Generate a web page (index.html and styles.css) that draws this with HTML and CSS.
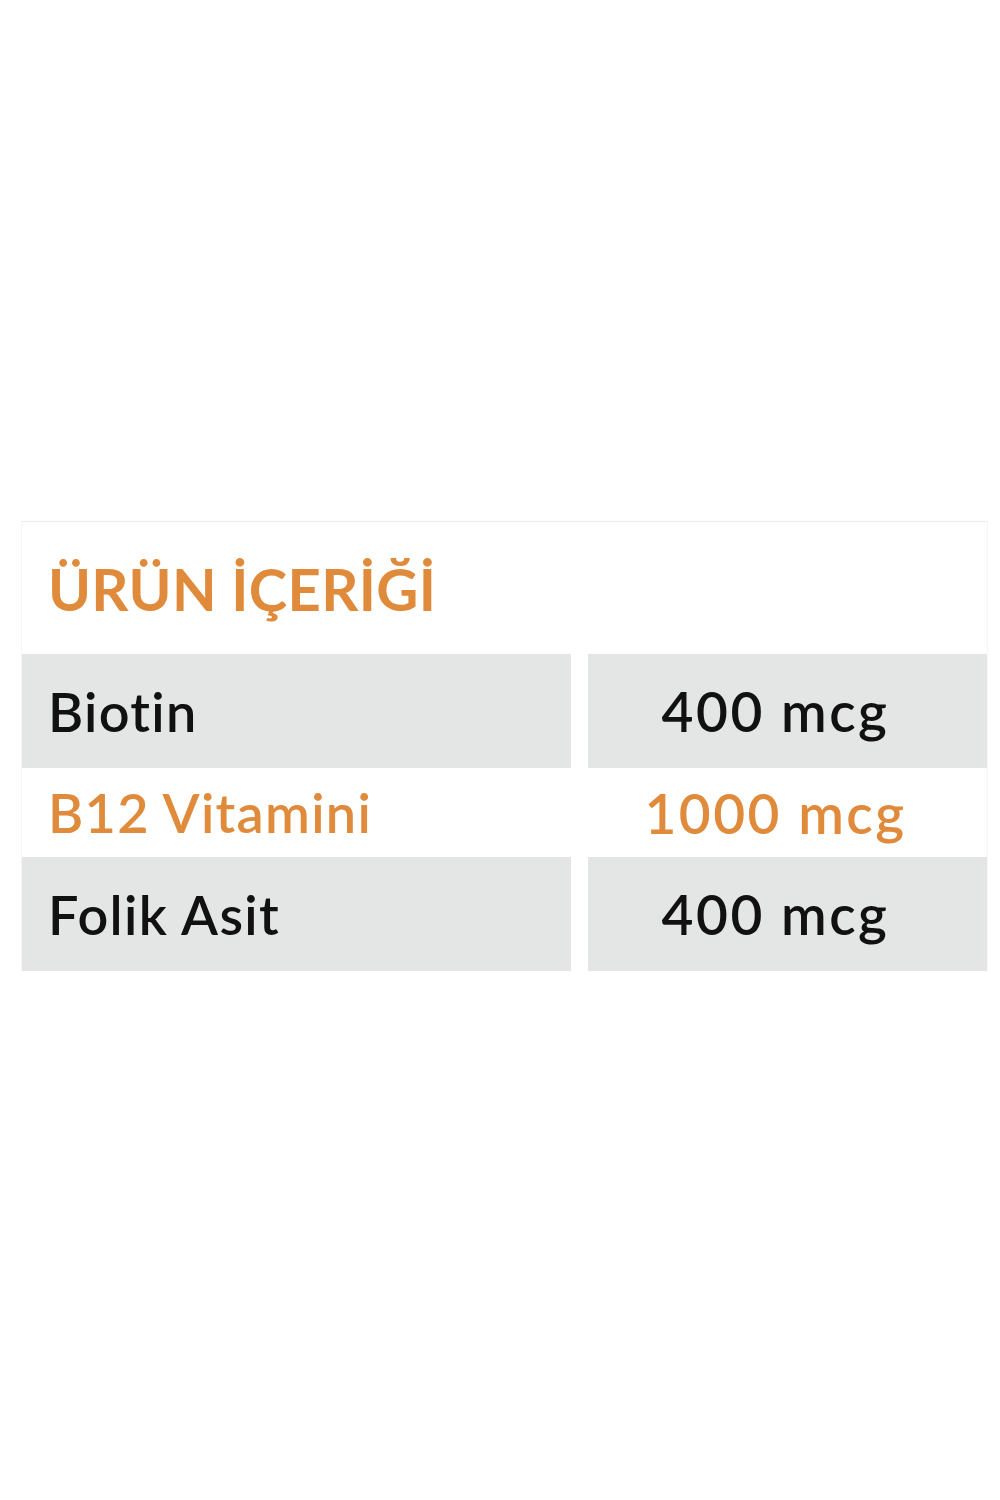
FILE: index.html
```html
<!DOCTYPE html>
<html lang="tr">
<head>
<meta charset="utf-8">
<link rel="stylesheet" href="styles.css">
</head>
<body>
<div class="card">
  <div class="title">ÜRÜN İÇERİĞİ</div>
  <div class="row gray">
    <div class="cell name">Biotin</div>
    <div class="cell value">400 mcg</div>
  </div>
  <div class="row white accent">
    <div class="cell name">B12 Vitamini</div>
    <div class="cell value">1000 mcg</div>
  </div>
  <div class="row gray">
    <div class="cell name">Folik Asit</div>
    <div class="cell value">400 mcg</div>
  </div>
</div>
</body>
</html>
```
FILE: styles.css
```css
html, body {
  margin: 0;
  padding: 0;
  background: #ffffff;
}
body {
  font-family: "Lato", "Liberation Sans", sans-serif;
  font-variant-ligatures: none;
  width: 1000px;
  height: 1500px;
}
.card {
  box-sizing: border-box;
  margin-top: 521px;
  margin-left: 21px;
  width: 967px;
  border-top: 1px solid #ececec;
  border-left: 1px solid #f6f6f6;
  border-right: 1px solid #f6f6f6;
}
.title {
  height: 132px;
  box-sizing: border-box;
  padding-left: 26px;
  padding-top: 38px;
  color: #e08b3c;
  font-size: 58px;
  font-weight: 700;
  line-height: 1;
  letter-spacing: 0.3px;
}
.row {
  display: grid;
  grid-template-columns: 549px 1fr;
  column-gap: 17px;
}
.row.gray {
  height: 114px;
}
.row.white {
  height: 89px;
}
.cell {
  display: flex;
  align-items: center;
  font-size: 54px;
  font-weight: 600;
  color: #111111;
}
.row.gray .cell {
  background: #e4e5e5;
}
.row.accent .cell {
  color: #e08b3c;
}
.name {
  padding-left: 26px;
  letter-spacing: 1.3px;
}
.value {
  justify-content: center;
  padding-right: 24px;
  letter-spacing: 2.5px;
  font-size: 55px;
}
```
